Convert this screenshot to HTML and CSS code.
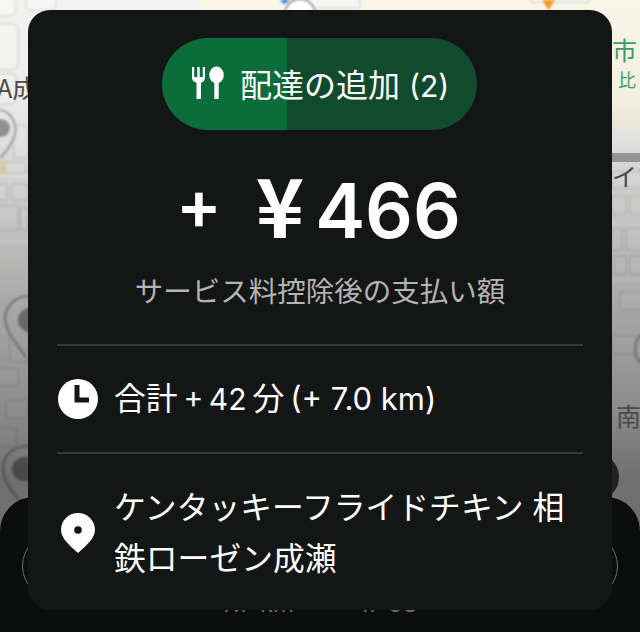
FILE: index.html
```html
<!DOCTYPE html>
<html lang="ja">
<head>
  <meta charset="UTF-8">
  <meta name="viewport" content="width=device-width, initial-scale=1.0">
  <title>配達の追加</title>
  <link rel="stylesheet" href="styles.css">
</head>
<body>
  <div class="screen">
    <!-- map behind the offer card -->
    <svg class="map" viewBox="0 0 640 632" width="640" height="632">
      <defs>
        <linearGradient id="scrim" x1="0" y1="0" x2="0" y2="1">
          <stop offset="0" stop-color="#000" stop-opacity="0"/>
          <stop offset="0.16" stop-color="#000" stop-opacity="0.03"/>
          <stop offset="0.32" stop-color="#000" stop-opacity="0.17"/>
          <stop offset="0.47" stop-color="#000" stop-opacity="0.3"/>
          <stop offset="0.63" stop-color="#000" stop-opacity="0.41"/>
          <stop offset="0.76" stop-color="#000" stop-opacity="0.54"/>
        </linearGradient>
      </defs>
      <rect width="640" height="632" fill="#f2f2f1"/>
      <rect x="200" y="0" width="440" height="130" fill="#f9f6e8"/>
      <rect x="605" y="130" width="35" height="22" fill="#f4f4f2"/>
      <rect x="605" y="153" width="35" height="9" fill="#a6a6a6"/>

      <g class="soft">
        <g class="blocks">
          <rect x="-10" y="-8" width="26" height="24" rx="5"/>
          <rect x="26" y="-8" width="30" height="18" rx="5"/>
          <rect x="-10" y="24" width="28" height="46" rx="6"/>
          <rect x="-10" y="74" width="26" height="30" rx="5"/>
          <rect x="14" y="126" width="14" height="32" rx="2"/>
          <rect x="-4" y="162" width="30" height="12" rx="2"/>
          <rect x="-4" y="184" width="11" height="16" rx="1"/>
          <rect x="12" y="184" width="16" height="16" rx="1"/>
          <rect x="-4" y="206" width="22" height="24" rx="2"/>
          <rect x="20" y="208" width="8" height="22" rx="1"/>
          <rect x="10" y="336" width="18" height="26" rx="2"/>
          <rect x="-6" y="368" width="24" height="18" rx="2"/>
          <rect x="6" y="400" width="22" height="18" rx="2"/>
          <rect x="-4" y="428" width="20" height="18" rx="2"/>
          <rect x="612" y="172" width="40" height="16" rx="2"/>
          <rect x="612" y="196" width="14" height="18" rx="2"/>
          <rect x="630" y="196" width="20" height="18" rx="2"/>
          <rect x="612" y="228" width="10" height="22" rx="2"/>
          <rect x="626" y="228" width="20" height="22" rx="2"/>
          <rect x="614" y="256" width="12" height="18" rx="2"/>
          <rect x="630" y="256" width="20" height="18" rx="2"/>
          <rect x="620" y="292" width="30" height="18" rx="2"/>
          <rect x="612" y="336" width="30" height="18" rx="2"/>
          <rect x="300" y="-10" width="60" height="18" rx="3"/>
          <rect x="530" y="-12" width="60" height="14" rx="3"/>
        </g>
        <path class="road" d="M0 176H28M0 242H28M612 224H640M612 280H640M0 330H28"/>

        <path class="pin-outline" d="M0 110C12 112 17 124 15 134C12 146 4 154 0 158"/>
        <circle class="pin-dot" cx="1" cy="128" r="9"/>
        <path class="pin-outline" d="M30 296C14 296 5 308 5 318C5 332 18 344 26 358"/>
        <circle class="pin-dot" cx="30" cy="320" r="12"/>
        <path class="pin-outline" d="M30 446C12 446 3 456 3 468C3 482 14 494 22 504"/>
        <circle class="pin-dot" cx="24" cy="469" r="12"/>
        <circle class="pin-outline" cx="655" cy="349" r="20"/>
        <rect x="0" y="160" width="6" height="14" fill="#f1e6bc"/>

        <circle class="top-marker" cx="300" cy="14" r="15"/>
        <path d="M280 0H290L284 4Z" fill="#2f73d8"/>
        <path d="M542 0H555L548.500 10Z" fill="#f29c1f"/>
      </g>

      <rect width="640" height="632" fill="url(#scrim)"/>

      <text class="map-label" x="-3" y="98">A成</text>
      <text class="map-label green" x="612" y="60">市</text>
      <text class="map-label green small" x="618" y="87">比</text>
      <text class="map-label" x="612" y="186">イツ</text>
      <text class="map-label" x="616" y="426">南</text>

      <circle cx="595" cy="477" r="24" fill="#222222"/>
    </svg>

    <!-- bottom sheet, mostly covered by the card -->
    <div class="sheet">
      <div class="sheet-ring"></div>
      <div class="sheet-text">7.7 km &nbsp; — &nbsp; 17:58</div>
    </div>

    <div class="card">
      <div class="pill">
        <svg class="pill-icon" viewBox="0 0 34 34" width="34" height="34">
          <path d="M1 1H3.200V11H6.300V1H8.700V11H11.800V1H14V11C14 14.500 12.500 16 10 16.500V33H5.500V16.500C3 16 1 14.500 1 11Z" fill="#fff"/>
          <ellipse cx="25.500" cy="9" rx="7.300" ry="8.500" fill="#fff"/>
          <rect x="23.300" y="14" width="4.400" height="19" fill="#fff"/>
        </svg>
        <span>配達の追加 <span class="latin">(2)</span></span>
      </div>

      <div class="amount">
        <span class="plus">+</span>
        <span class="yen">¥</span>
        <span>466</span>
      </div>
      <div class="amount-note">サービス料控除後の支払い額</div>

      <div class="row row-time">
        <svg class="row-icon" viewBox="0 0 40 40" width="40" height="40">
          <circle cx="20" cy="20" r="20" fill="#fff"/>
          <path d="M19 6V21H31" fill="none" stroke="#141515" stroke-width="5"/>
        </svg>
        <span>合計 <span class="latin">+ 42</span> 分 <span class="latin distance">(+ 7.0 km)</span></span>
      </div>

      <div class="row row-place">
        <svg class="row-icon" viewBox="0 0 40 42" width="40" height="42">
          <path d="M20 1C10.500 1 3 8.500 3 18C3 26 11 33 20 41C29 33 37 26 37 18C37 8.500 29.500 1 20 1Z" fill="#fff"/>
          <circle cx="20" cy="18" r="3.800" fill="#141515"/>
        </svg>
        <span>ケンタッキーフライドチキン 相鉄ローゼン成瀬</span>
      </div>
    </div>
  </div>
</body>
</html>
```

FILE: styles.css
```css
html, body {
  margin: 0;
  padding: 0;
  background: #0c0d0d;
}
.screen {
  position: relative;
  width: 640px;
  height: 632px;
  overflow: hidden;
  padding: 10px 28px 0;
  box-sizing: border-box;
  font-family: Inter, "Noto Sans CJK JP", sans-serif;
  color: #fff;
}
.map {
  position: absolute;
  top: 0;
  left: 0;
}
.soft {
  filter: blur(0.8px);
}
.blocks rect {
  fill: #f6f6f5;
  stroke: #dcdcda;
  stroke-width: 1.5;
}
.road {
  fill: none;
  stroke: #fbfbfb;
  stroke-width: 4;
}
.pin-outline {
  fill: #f2f2f2;
  stroke: #b4b4b4;
  stroke-width: 2.5;
}
.pin-dot {
  fill: #9a9a9a;
}
.top-marker {
  fill: #fff;
  stroke: #999;
  stroke-width: 2;
}
.map-label {
  font-family: "Noto Sans CJK JP", sans-serif;
  font-size: 25px;
  fill: #4a4a4a;
}
.map-label.green {
  fill: #3f9a63;
}
.map-label.small {
  font-size: 18px;
}
.sheet {
  position: absolute;
  left: 0;
  right: 0;
  top: 497px;
  bottom: 0;
  background: #0c0d0d;
  border-radius: 34px 34px 0 0;
}
.sheet-ring {
  position: absolute;
  left: 22px;
  right: 22px;
  top: 36px;
  height: 66px;
  border: 1.5px solid #6e6e6e;
  border-radius: 34px;
  box-sizing: border-box;
}
.sheet-text {
  position: absolute;
  left: 0;
  right: 0;
  top: 92px;
  text-align: center;
  font-size: 24px;
  color: #6a6a6a;
}

.card {
  position: relative;
  width: 584px;
  height: 600px;
  box-sizing: border-box;
  padding: 28px 29px 0;
  background: #141515;
  border-radius: 22px;
  display: flex;
  flex-direction: column;
}
.latin {
  font-size: 30px;
}
.pill {
  align-self: flex-start;
  margin-left: 105px;
  width: 315px;
  height: 92px;
  box-sizing: border-box;
  padding: 0 0 2px 29px;
  border-radius: 46px;
  background: linear-gradient(90deg, #0b6e3a 125px, #124a2d 125px);
  display: flex;
  align-items: center;
  gap: 15px;
  font-size: 32px;
  white-space: nowrap;
}
.pill-icon {
  flex: none;
}
.amount {
  margin-top: 25px;
  padding-right: 3px;
  height: 96px;
  line-height: 96px;
  display: flex;
  align-items: baseline;
  justify-content: center;
  font-size: 75px;
  font-weight: 600;
}
.plus {
  align-self: flex-start;
  line-height: 98px;
  font-size: 68px;
  margin-right: 34px;
}
.yen {
  font-family: "Noto Sans CJK JP", sans-serif;
  font-size: 82px;
  font-weight: 700;
  margin-right: 11px;
}
.amount-note {
  margin-top: 19px;
  height: 44px;
  line-height: 44px;
  text-align: center;
  font-size: 28.500px;
  color: #b4b4b4;
}
.row {
  display: flex;
  align-items: center;
  gap: 16px;
  border-top: 2px solid #373838;
  font-size: 31.8px;
  line-height: 51px;
  font-weight: 400;
}
.row-time {
  margin-top: 30px;
  height: 108px;
  box-sizing: border-box;
  word-spacing: -3px;
}
.distance {
  font-size: 31px;
  word-spacing: 0;
}
.row-place {
  padding-top: 28px;
}
.row-icon {
  flex: none;
  margin-left: 1px;
}
```
